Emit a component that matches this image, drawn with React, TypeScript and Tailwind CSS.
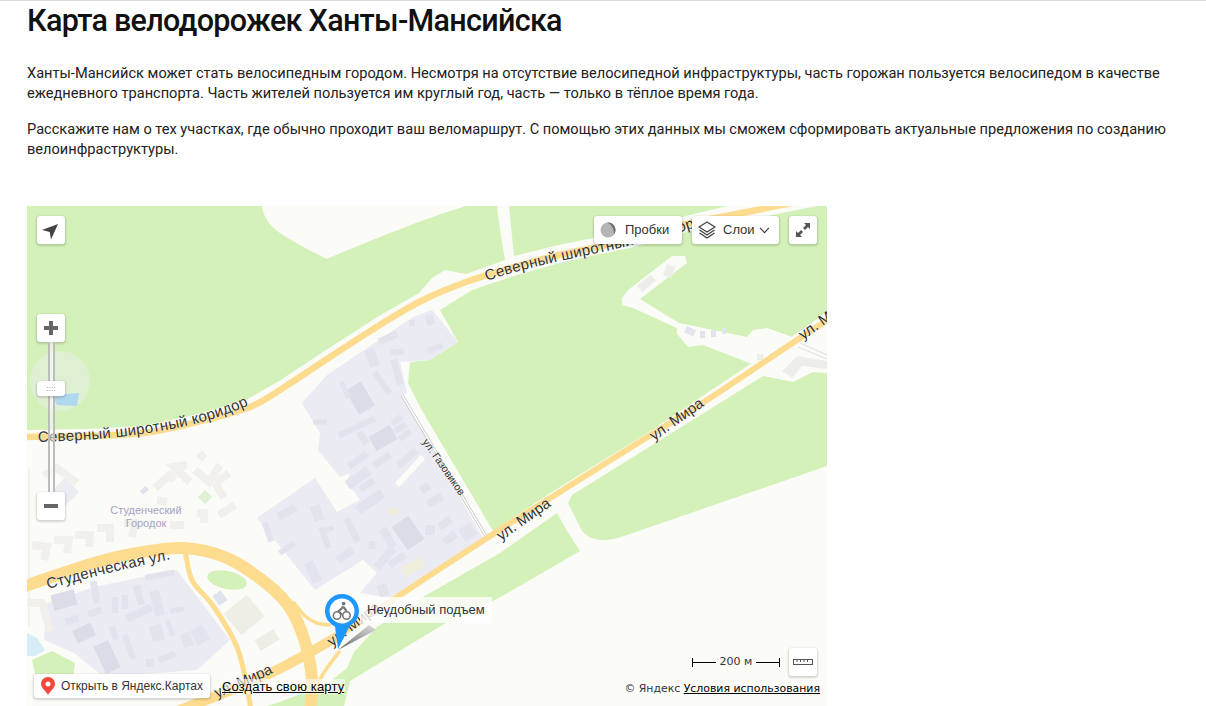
type Pt = [number, number]

// catmull-rom through the points, so the roads bend instead of kinking
function smooth(p: Pt[]) {
  let d = `M${p[0][0]},${p[0][1]}`
  for (let i = 0; i < p.length - 1; i++) {
    const a = p[Math.max(i - 1, 0)]
    const b = p[i]
    const c = p[i + 1]
    const e = p[Math.min(i + 2, p.length - 1)]
    d += ` C${b[0] + (c[0] - a[0]) / 6},${b[1] + (c[1] - a[1]) / 6} ${c[0] - (e[0] - b[0]) / 6},${c[1] - (e[1] - b[1]) / 6} ${c[0]},${c[1]}`
  }
  return d
}

const roads: { pts: Pt[]; w: number }[] = [
  { pts: [[-5, 231], [60, 230], [117, 227], [170, 216], [223, 201], [256, 182], [303, 151], [356, 117], [396, 94], [439, 76], [490, 60], [536, 48], [607, 33], [663, 17], [720, 6], [790, -8]], w: 6.5 },
  { pts: [[810, 108], [773, 132], [680, 194], [622, 230], [525, 291], [460, 332], [370, 391], [310, 431]], w: 6 },
  { pts: [[310, 431], [250, 464], [197, 487], [150, 505]], w: 10 },
  { pts: [[-5, 381], [67, 357], [110, 347], [157, 342], [200, 352], [240, 378], [263, 402], [278, 436], [285, 474], [283, 505]], w: 12 },
  { pts: [[158, 345], [160, 355], [166, 376], [187, 401], [210, 441], [220, 481], [224, 505]], w: 5 },
  { pts: [[267, 397], [278, 410], [290, 417], [302, 419]], w: 3.5 },
  { pts: [[312, 446], [296, 468], [289, 485], [287, 505]], w: 3.5 },
]

// cx, cy, w, h, rotation
const buildings = [
  [333, 192, 18, 28, -30], [381, 327, 20, 28, -35], [361, 332, 8, 22, -30], [358, 352, 8, 25, 40], [343, 296, 30, 10, -35],
  [331, 272, 26, 10, -35], [340, 279, 16, 7, -35], [355, 254, 20, 7, -35], [331, 254, 22, 7, -35], [380, 252, 24, 7, -40],
  [356, 232, 24, 16, -30], [336, 232, 7, 14, -30], [373, 222, 14, 6, -35], [378, 229, 14, 6, -35], [370, 214, 12, 6, -35],
  [330, 221, 40, 6, -25], [293, 216, 14, 5, 0], [318, 184, 5, 18, -25], [345, 152, 10, 18, -20], [370, 146, 14, 6, -5],
  [361, 132, 20, 7, -25], [408, 142, 16, 6, -20], [385, 117, 6, 6, 0], [403, 114, 8, 10, -20], [370, 166, 7, 26, -15],
  [355, 177, 6, 26, -35], [408, 294, 16, 8, -30], [398, 282, 10, 8, -30], [418, 317, 14, 8, -35], [423, 332, 14, 8, -35],
  [403, 324, 10, 10, 0], [441, 326, 14, 14, -30], [260, 306, 20, 8, -30], [290, 307, 10, 16, -20], [241, 326, 6, 20, -20],
  [260, 342, 18, 6, -35], [298, 332, 6, 22, -20], [300, 324, 14, 5, -20], [325, 324, 7, 26, -25], [318, 349, 18, 8, -35],
  [345, 339, 7, 8, 0], [286, 366, 10, 22, -25], [370, 354, 18, 7, -35], [356, 384, 10, 12, -20],
  [37, 394, 24, 16, -15], [68, 386, 7, 22, -10], [88, 399, 6, 16, 0], [98, 396, 6, 14, 0], [112, 389, 7, 20, -15],
  [130, 397, 10, 26, -15], [150, 404, 14, 5, -10], [133, 369, 30, 6, -10], [45, 414, 14, 7, -15], [68, 406, 14, 7, -20],
  [112, 407, 28, 8, -25], [57, 427, 20, 14, -25], [80, 451, 16, 30, -25], [87, 427, 6, 14, -20], [102, 441, 6, 26, -20],
  [130, 427, 12, 16, -15], [143, 422, 5, 16, -20], [160, 434, 10, 14, -20], [173, 429, 14, 16, -30], [140, 451, 18, 6, -20],
  [123, 457, 8, 8, 0],
]

const houses = [
  'M17,270 L30,262 L50,277', 'M128,282 L143,269 L148,274', 'M160,259 L147,261 L163,276', 'M168,264 L182,276 L193,259',
  'M188,277 L202,267', 'M188,277 L197,292', 'M192,309 L208,299', 'M5,339 L20,341 L17,354', 'M27,334 L42,334 L40,347',
  'M48,329 L63,329 L62,341', 'M70,322 L83,322 L83,336', 'M97,317 L107,317 L105,331', 'M130,294 L140,296', 'M143,319 L157,319',
  'M170,307 L177,307 L177,317', 'M0,397 L15,397 L23,425',
]

function MapLayer() {
  return (
    <svg width="800" height="500" viewBox="0 0 800 500" className="absolute inset-0">
      <defs>
        <linearGradient id="wedge" x1="0" y1="1" x2="1" y2="0">
          <stop offset="0" stopColor="#666" />
          <stop offset="1" stopColor="#ddd" />
        </linearGradient>
        <path id="north-a" d="M11,236 C90,234 170,225 228,196" />
        <path id="north-b" d="M460,75 C500,60 560,50 610,38 C640,30 660,25 695,12" />
        <path id="stud" d="M21,383 C60,372 100,362 145,353" />
      </defs>
      <rect width="800" height="500" fill="#fbfbf8" />
      <g fill="#d3f1b9">
        <path d="M0,0 L235,0 C238,20 250,28 300,53 C330,40 390,15 439,0 L470,0 C472,20 476,40 478,54 L439,68 L418,64 L405,72 L392,87 L352,110 L299,144 L252,175 L219,194 L167,209 L115,220 L60,223 L0,224 Z" />
        <path d="M482,0 L700,0 L663,9 L607,24 L536,38 L487,50 Z" />
        <path d="M413,104 L445,84 L490,69 L536,56 L607,41 L663,25 L720,14 L800,-2 L800,106 L773,125 L680,187 L622,226 L525,286 L466,325 L393,201 L381,177 L383,156 L403,154 L431,136 Z" />
        <path d="M541,297 L545,289 L693,197 L736,170 L766,176 L786,166 L800,167 L800,260 L597,330 C580,336 565,336 555,325 Z" />
        <path d="M530,307 L473,347 L396,391 L350,421 L327,446 L320,462 L300,478 L250,497 L240,500 L317,500 L323,475 L417,418 L470,393 L553,345 L540,325 Z" />
        <ellipse cx="200" cy="374" rx="20" ry="9" transform="rotate(12 200 374)" />
        <path d="M5,454 L25,445 L48,457 L46,472 L10,476 Z" />
      </g>
      <path d="M645,50 L658,50 L660,57 L613,93 L652,117 L720,131 L726,124 L740,122 L768,132 L725,158 L676,139 L661,141 L650,128 L650,122 L606,102 L595,99 L595,92 L601,84 Z" fill="#fbfbf8" />
      <g fill="#eeeee9">
        <rect x="640" y="58" width="9" height="12" transform="rotate(20 640 58)" />
        <rect x="610" y="80" width="18" height="8" transform="rotate(-40 610 80)" />
        <rect x="730" y="148" width="6" height="6" />
        <path d="M755,165 L770,150 L800,155 L800,163 L775,160 L765,172 Z" />
      </g>
      <g fill="#e4e4f0">
        <rect x="660" y="120" width="10" height="7" transform="rotate(25 660 120)" />
        <rect x="673" y="125" width="5" height="7" />
        <rect x="684" y="124" width="5" height="7" />
        <rect x="695" y="122" width="4" height="6" />
      </g>
      <path d="M773,137 L800,149 M771,141 L800,153" stroke="#d8d8d8" strokeWidth="0.8" />
      <ellipse cx="33" cy="175" rx="30" ry="30" fill="#dff0d2" />
      <path d="M25,189 L52,187 L50,200 L30,199 Z" fill="#b0d9f0" />
      <path d="M0,427 L10,432 L18,444 L8,450 L0,450 Z" fill="#d6ecf6" />
      <path d="M2,263 L2,420" stroke="#e6e6e6" strokeWidth="1" />
      <path d="M405,104 L431,136 L403,154 L373,156 L380,187 L375,189 L456,332 L363,392 L333,387 L350,367 L336,354 L320,364 L288,384 L230,312 L288,272 L310,306 L333,294 L320,276 L323,267 L313,271 L291,244 L293,227 L275,197 L300,169 L386,111 Z" fill="#ebebf4" />
      <path d="M67,381 L150,364 L203,434 L170,464 L77,471 L47,447 L17,434 L20,397 Z" fill="#ebebf4" />
      {buildings.map(([cx, cy, w, h, r], i) => (
        <rect key={i} x={cx - w / 2} y={cy - h / 2} width={w} height={h} fill={w >= 16 && h >= 14 ? '#dcdce9' : '#e3e3ee'} transform={`rotate(${r} ${cx} ${cy})`} />
      ))}
      <g fill="none" stroke="#f1f0eb" strokeWidth="8">
        {houses.map((d, i) => (
          <path key={i} d={d} />
        ))}
      </g>
      <rect x="171" y="246" width="8" height="8" fill="#f1f0eb" transform="rotate(45 175 250)" />
      <rect x="173" y="286" width="10" height="10" fill="#dff0d4" transform="rotate(45 178 291)" />
      <rect x="113" y="282" width="8" height="5" fill="#e2e2ee" transform="rotate(-40 117 284)" />
      <rect x="28" y="276" width="20" height="20" fill="#ecedf2" transform="rotate(45 38 286)" />
      <path d="M370,279 L396,251" stroke="#fbfbf8" strokeWidth="6" />
      <rect x="361" y="302" width="10" height="7" fill="#efefdc" />
      <rect x="375" y="356" width="22" height="10" fill="#efefdc" transform="rotate(-30 386 361)" />
      <rect x="188" y="386" width="10" height="12" fill="#dfe3ec" transform="rotate(-35 193 392)" />
      <rect x="202" y="395" width="30" height="28" fill="#efeee6" transform="rotate(-40 217 409)" />
      <rect x="229" y="428" width="22" height="12" fill="#efeee6" transform="rotate(-30 240 434)" />
      <path d="M375,189 L460,332" stroke="#c4c4c4" strokeWidth="3" />
      <path d="M375,189 L460,332" stroke="#ffffff" strokeWidth="1.5" />
      <path d="M476,0 L484,56" stroke="#fbfbf8" strokeWidth="5" />
      <g fill="none" stroke="#fddc90" strokeLinecap="round" strokeLinejoin="round">
        {roads.map((r, i) => (
          <path key={i} d={smooth(r.pts)} strokeWidth={r.w} />
        ))}
      </g>
      <path d="M311,444 L342,419 L349,424 Z" fill="url(#wedge)" />
      <g className="font-['Liberation_Sans',sans-serif]" fill="#333" stroke="#fbfbf8" strokeWidth="0.5" style={{ paintOrder: 'stroke' }} fontSize="15">
        <text letterSpacing="0.3"><textPath href="#north-a">Северный широтный коридор</textPath></text>
        <text letterSpacing="0.3"><textPath href="#north-b">Северный широтный коридор</textPath></text>
        <text letterSpacing="0.3"><textPath href="#stud">Студенческая ул.</textPath></text>
        <text transform="translate(474 335) rotate(-35)">ул. Мира</text>
        <text transform="translate(627 235) rotate(-35)">ул. Мира</text>
        <text transform="translate(776 134) rotate(-35)">ул. Мира</text>
        <text transform="translate(190 492) rotate(-24)">ул. Мира</text>
        <text transform="translate(305 441) rotate(-38)">ул. Мира</text>
        <text transform="translate(395 236) rotate(55)" fontSize="10.5">ул. Газовиков</text>
      </g>
      <g className="font-['Liberation_Sans',sans-serif]" fill="#a3a3c4" fontSize="11" textAnchor="middle">
        <text x="119" y="308">Студенческий</text>
        <text x="119" y="321">Городок</text>
      </g>
    </svg>
  )
}

function Pin() {
  return (
    <svg width="36" height="58" viewBox="0 0 36 58" className="shrink-0">
      <path d="M18,1 C8.6,1 1,8.6 1,18 C1,25 5,30.5 11,33.5 L14,56 L26,32.5 C31.5,29.5 35,24 35,18 C35,8.6 27.4,1 18,1 Z" fill="#1e98ff" />
      <circle cx="18" cy="18" r="12.5" fill="#fff" />
      <g fill="none" stroke="#777" strokeWidth="1.6">
        <circle cx="13" cy="22.5" r="3.7" />
        <circle cx="22.5" cy="22.5" r="3.7" />
        <path d="M19.5,13.5 L14.5,18.5 L18,21.5 M19.5,14 L22.5,18" strokeWidth="2.2" />
      </g>
      <circle cx="19.6" cy="10.6" r="1.9" fill="#777" />
    </svg>
  )
}

const btn = 'bg-white rounded-[3px] shadow-[0_1px_2px_1px_rgba(0,0,0,0.15)] flex items-center'

export default function App() {
  return (
    <div className="w-[1206px] h-[706px] overflow-hidden bg-white border-t border-[#dddddd] font-['Roboto',sans-serif] text-[#222]">
      <div className="pl-[27px]">
        <h1 className="text-[30.5px] leading-[40px] font-medium tracking-[-0.7px] text-[#111]">Карта велодорожек Ханты-Мансийска</h1>
        <p className="mt-[22px] w-[1160px] text-[14.6px] leading-[20px]">
          Ханты-Мансийск может стать велосипедным городом. Несмотря на отсутствие велосипедной инфраструктуры, часть горожан пользуется велосипедом в качестве ежедневного транспорта. Часть жителей пользуется им круглый год, часть — только в тёплое время года.
        </p>
        <p className="mt-[16px] w-[1160px] text-[14.6px] leading-[20px]">
          Расскажите нам о тех участках, где обычно проходит ваш веломаршрут. С помощью этих данных мы сможем сформировать актуальные предложения по созданию велоинфраструктуры.
        </p>
        <div className="relative mt-[47px] w-[800px] h-[500px] overflow-hidden font-['Liberation_Sans',sans-serif] text-[13px] text-[#333]">
          <MapLayer />

          {/* left controls */}
          <div className="absolute left-[10px] top-[10px] flex flex-col w-[28px]">
            <div className={`${btn} w-[28px] h-[28px]`}>
              <svg width="28" height="28" viewBox="0 0 28 28"><path d="M5,14 L21,8 L14,23.5 L12.7,16 Z" fill="#444" /></svg>
            </div>
            <div className={`${btn} mt-[70px] w-[28px] h-[28px] justify-center`}>
              <svg width="14" height="14" viewBox="0 0 14 14" fill="#666"><path d="M5,0 H9 V5 H14 V9 H9 V14 H5 V9 H0 V5 H5 Z" /></svg>
            </div>
            <div className="relative h-[150px] flex justify-center">
              <div className="w-[7px] border-x-2 border-[#bdbdbd] bg-white/50" />
              <div className={`${btn} absolute left-0 top-[39px] w-[28px] h-[15px] justify-center text-[8px] leading-none text-[#777]`}>::::</div>
            </div>
            <div className={`${btn} w-[28px] h-[28px] justify-center`}>
              <svg width="14" height="4" viewBox="0 0 14 4" fill="#666"><rect width="14" height="4" /></svg>
            </div>
          </div>

          {/* top right controls */}
          <div className="absolute right-[10px] top-[10px] flex gap-[10px] h-[28px]">
            <div className={`${btn} w-[88px] gap-[9px] pl-[6px]`}>
              <svg width="16" height="16" viewBox="0 0 16 16">
                <circle cx="8" cy="8" r="7.5" fill="#b5b5b5" />
                <path d="M7,0.6 A7.5,7.5 0 0 1 14,12.5 C14,7 12,3 7,0.6 Z" fill="#6f6f6f" />
              </svg>
              <span>Пробки</span>
            </div>
            <div className={`${btn} w-[87px] gap-[6px] pl-[5px]`}>
              <svg width="20" height="20" viewBox="0 0 20 20" fill="none" stroke="#444" strokeWidth="1.4" strokeLinejoin="round">
                <path d="M10,2 L18,7 L10,12 L2,7 Z" />
                <path d="M2.5,10 L10,15 L17.5,10" />
                <path d="M2.5,13 L10,18 L17.5,13" />
              </svg>
              <span>Слои</span>
              <svg width="11" height="7" viewBox="0 0 12 8" fill="none" stroke="#333" strokeWidth="1.2" className="-ml-[2px]"><path d="M1,1 L6,6.5 L11,1" /></svg>
            </div>
            <div className={`${btn} w-[28px] justify-center`}>
              <svg width="16" height="16" viewBox="0 0 16 16" fill="#555">
                <path d="M9,1 L15,1 L15,7 L13,5 L10,8 L8,6 L11,3 Z" />
                <path d="M7,15 L1,15 L1,9 L3,11 L6,8 L8,10 L5,13 Z" />
              </svg>
            </div>
          </div>

          {/* scale, ruler, copyright */}
          <div className="absolute right-[7px] bottom-[10px] flex flex-col items-end gap-[6px]">
            <div className="flex items-center gap-[9px] mr-[3px]">
              <div className="w-[88px] flex items-center justify-between text-[11px] leading-[14px] font-['DejaVu_Sans',sans-serif]">
                <span className="w-[24px] h-[9px] border-l border-black flex items-center"><span className="w-full h-px bg-black" /></span>
                <span>200 м</span>
                <span className="w-[24px] h-[9px] border-r border-black flex items-center"><span className="w-full h-px bg-black" /></span>
              </div>
              <div className={`${btn} w-[28px] h-[28px] justify-center`}>
                <svg width="20" height="8" viewBox="0 0 20 8" fill="none" stroke="#555">
                  <rect x="0.5" y="1.5" width="19" height="5" />
                  <path d="M4,1 V4 M7.5,1 V4 M11,1 V4 M14.5,1 V4" />
                </svg>
              </div>
            </div>
            <div className="bg-white/60 text-[10.9px] leading-[14px] font-['DejaVu_Sans',sans-serif] whitespace-nowrap">
              © Яндекс <span className="underline text-black">Условия использования</span>
            </div>
          </div>

          {/* placemark */}
          <div className="absolute left-[297px] top-[387px] flex items-start">
            <Pin />
            <div className="mt-[4px] h-[26px] w-[132px] pl-[7px] bg-white/80 flex items-center whitespace-nowrap">Неудобный подъем</div>
          </div>

          {/* bottom left links */}
          <div className="absolute left-[7px] bottom-[8px] flex items-center gap-[11px] whitespace-nowrap">
            <div className={`${btn} h-[24px] w-[176px] gap-[6px] pl-[7px] text-[12px]`}>
              <svg width="14" height="18" viewBox="0 0 14 18" className="shrink-0">
                <path d="M7,0 C3,0 0,3 0,7 C0,11 5,14 7,18 C9,14 14,11 14,7 C14,3 11,0 7,0 Z" fill="#f4483c" />
                <circle cx="7" cy="7" r="2.5" fill="#fff" />
              </svg>
              <span>Открыть в Яндекс.Картах</span>
            </div>
            <div className="bg-white/60 px-px text-[13px] leading-[15px] tracking-[0.15px] underline text-black">Создать свою карту</div>
          </div>
        </div>
      </div>
    </div>
  )
}
